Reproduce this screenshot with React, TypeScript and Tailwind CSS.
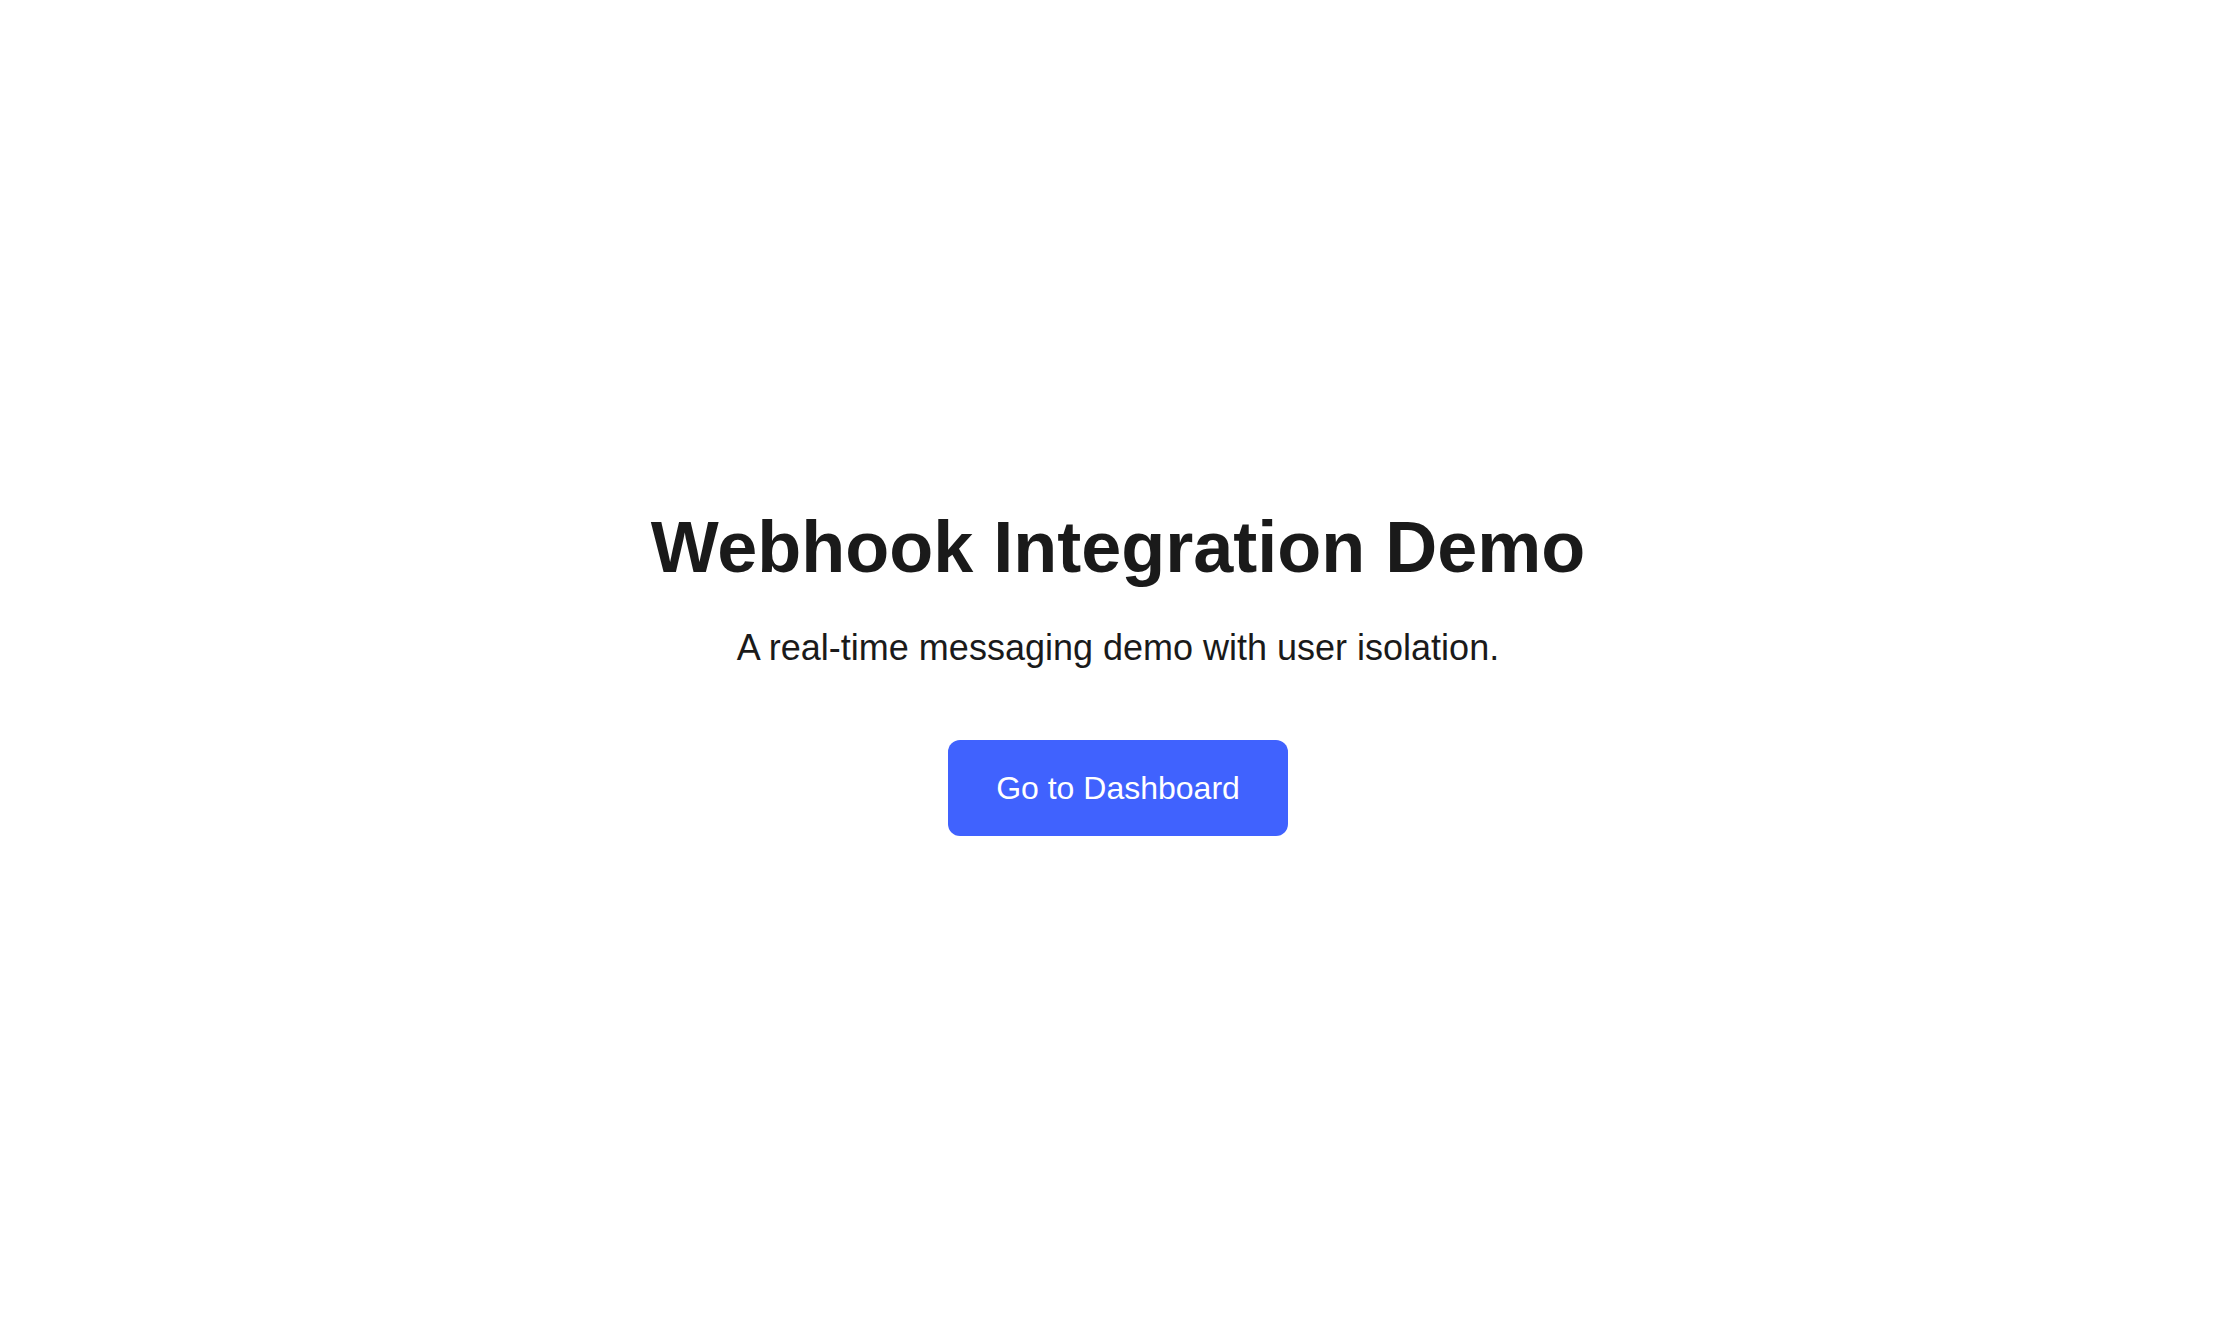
export default function App() {
  return (
    <main className="flex h-screen flex-col items-center justify-center bg-white pl-[6px] pt-4 font-['Liberation_Sans',Arial,sans-serif]">
      <h1 className="text-[72px] font-bold leading-[1.1] text-[#1a1a1a]">
        Webhook Integration Demo
      </h1>
      <p className="mt-[34px] text-[36px] leading-[1.5] text-[#1a1a1a]">
        A real-time messaging demo with user isolation.
      </p>
      <button
        type="button"
        className="mt-[65px] rounded-xl bg-[#4062fe] px-12 py-6 text-[32px] leading-[48px] text-white"
      >
        Go to Dashboard
      </button>
    </main>
  );
}
